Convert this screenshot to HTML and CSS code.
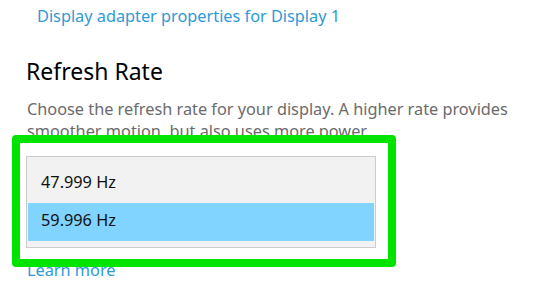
FILE: index.html
```html
<!DOCTYPE html>
<html>
<head>
<meta charset="utf-8">
<link rel="stylesheet" href="styles.css">
</head>
<body>
<div class="page">
  <a class="adapter-link" href="#">Display adapter properties for Display 1</a>
  <h2 class="title">Refresh Rate</h2>
  <p class="desc">Choose the refresh rate for your display. A higher rate provides smoother motion, but also uses more power.</p>
  <div class="listbox">
    <div class="item">47.999 Hz</div>
    <div class="item selected">59.996 Hz</div>
  </div>
  <a class="learn" href="#">Learn more</a>
</div>
<div class="highlight"></div>
</body>
</html>
```
FILE: styles.css
```css
html, body {
  margin: 0;
  padding: 0;
  background: #ffffff;
  width: 557px;
  height: 302px;
  overflow: hidden;
}
body {
  font-family: "Noto Sans", "Open Sans", sans-serif;
  color: #000;
  position: relative;
}
.page {
  padding: 5px 0 0 26px;
  display: flex;
  flex-direction: column;
  align-items: flex-start;
}
.adapter-link {
  margin-left: 11px;
  font-size: 16.3px;
  line-height: 22px;
  color: #2e9ad7;
  text-decoration: none;
}
.title {
  margin: 29px 0 0 0;
  font-size: 23px;
  font-weight: normal;
  line-height: 30px;
}
.desc {
  margin: 12px 0 0 1px;
  width: 520px;
  font-size: 16.3px;
  line-height: 22px;
  color: #6b6b6b;
}
.listbox {
  margin-top: 14px;
  width: 346px;
  border: 1px solid #cccccc;
  background: #f2f2f2;
  padding: 8px 1px 6px 1px;
}
.item {
  height: 38px;
  line-height: 34px;
  padding-left: 13px;
  font-size: 16.3px;
  color: #111;
}
.item.selected {
  background: #80d4ff;
}
.learn {
  margin: 12px 0 0 1px;
  font-size: 16.3px;
  line-height: 20px;
  color: #2e9ad7;
  text-decoration: none;
}
.highlight {
  position: absolute;
  left: 12px;
  top: 135px;
  width: 384px;
  height: 132px;
  box-sizing: border-box;
  border: 8px solid #00e400;
  border-radius: 4px;
}
```
